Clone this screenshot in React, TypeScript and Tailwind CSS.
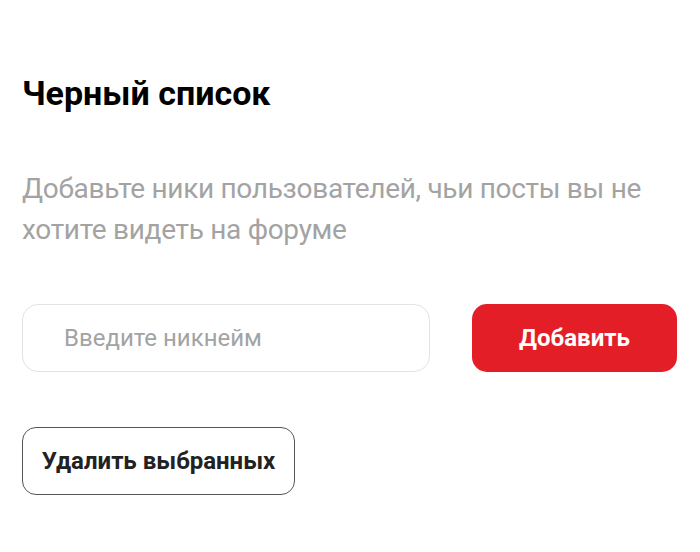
export default function App() {
  return (
    <div className="min-h-[552px] bg-white px-[22px] pt-[73px] font-['Roboto',sans-serif]">
      <h1 className="text-[34px] leading-[40px] font-bold text-black">Черный список</h1>
      <p className="mt-[55px] w-[640px] text-[28px] leading-[41px] tracking-[-0.3px] text-[#a3a3a3]">
        Добавьте ники пользователей, чьи посты вы не хотите видеть на форуме
      </p>
      <div className="mt-[54px] flex gap-[42px]">
        <input
          className="h-[68px] w-[408px] rounded-[16px] border border-[#e3e3e3] px-[41px] text-[24px] text-[#333] outline-none placeholder:text-[#a3a3a3]"
          placeholder="Введите никнейм"
        />
        <button className="h-[68px] w-[205px] rounded-[15px] bg-[#e41e26] text-[24px] font-bold text-white">
          Добавить
        </button>
      </div>
      <button className="mt-[55px] h-[68px] w-[273px] rounded-[14px] border border-[#555] text-[24px] font-bold text-[#222]">
        Удалить выбранных
      </button>
    </div>
  );
}
